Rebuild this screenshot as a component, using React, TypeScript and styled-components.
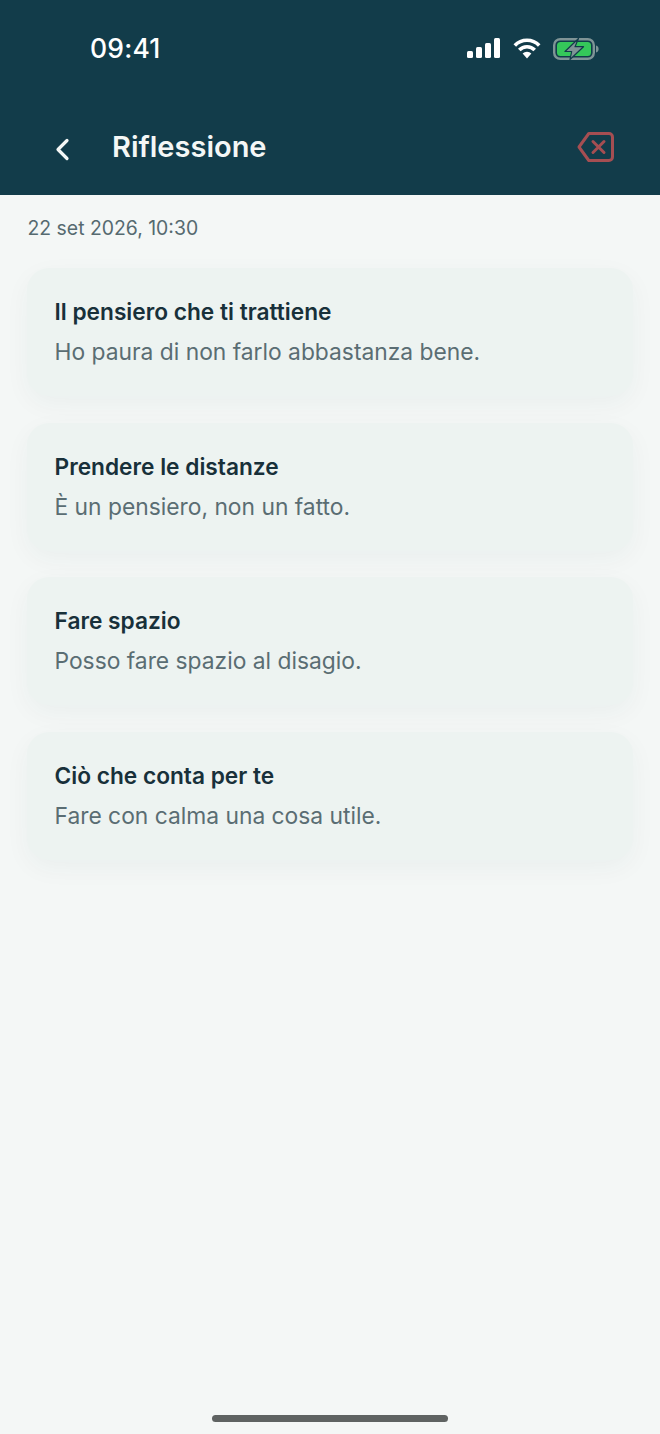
import React from "react";
import styled, { createGlobalStyle } from "styled-components";

const Global = createGlobalStyle`
  html, body { margin: 0; padding: 0; background: #f4f7f6; }
  body { font-family: Inter, "Liberation Sans", sans-serif; }
`;

const Screen = styled.div`
  width: 660px;
  height: 1434px;
  display: flex;
  flex-direction: column;
  background: #f4f7f6;
  overflow: hidden;
`;

const Header = styled.header`
  height: 195px;
  flex: none;
  background: #123c4a;
  display: flex;
  flex-direction: column;
`;

const StatusBar = styled.div`
  height: 97px;
  display: flex;
  align-items: flex-start;
  justify-content: space-between;
  padding: 32px 61px 0 90px;
  box-sizing: border-box;
`;

const Clock = styled.span`
  font-size: 26.5px;
  line-height: 33px;
  font-weight: 500;
  color: #fff;
  letter-spacing: 0.2px;
`;

const StatusIcons = styled.div`
  display: flex;
  align-items: center;
  gap: 12px;
  height: 33px;
`;

const NavBar = styled.div`
  display: flex;
  align-items: center;
  height: 100px;
  padding: 2px 45px 0 55px;
  box-sizing: border-box;
`;

const BackIcon = styled.svg`
  width: 15px;
  height: 24px;
  margin-top: 4px;
  flex: none;
`;

const Title = styled.h1`
  margin: 0 0 0 42px;
  flex: 1;
  font-size: 29px;
  line-height: 36px;
  font-weight: 600;
  color: #f4f7f6;
`;

const Content = styled.main`
  display: flex;
  flex-direction: column;
  padding: 21px 27px 0;
`;

const DateLine = styled.div`
  font-size: 19.4px;
  line-height: 24px;
  color: #566a70;
  margin-left: 0.5px;
  margin-bottom: 28px;
`;

const Cards = styled.div`
  display: flex;
  flex-direction: column;
  gap: 26.6px;
`;

const Card = styled.section`
  height: 128px;
  box-sizing: border-box;
  padding: 29px 27px 0 27.5px;
  border-radius: 22px;
  background: #edf3f1;
  box-shadow: 0 8px 26px rgba(18, 60, 74, 0.045);
`;

const CardTitle = styled.h2`
  margin: 0;
  font-size: 22.7px;
  line-height: 30px;
  font-weight: 600;
  color: #18303a;
`;

const CardText = styled.p`
  margin: 10px 0 0;
  font-size: 22.8px;
  line-height: 30px;
  font-weight: 400;
  color: #5a6d73;
`;

const Footer = styled.div`
  margin-top: auto;
  display: flex;
  justify-content: center;
  padding-bottom: 12px;
`;

const HomeBar = styled.div`
  width: 236px;
  height: 7px;
  border-radius: 4px;
  background: #5f6362;
`;

const items = [
  ["Il pensiero che ti trattiene", "Ho paura di non farlo abbastanza bene."],
  ["Prendere le distanze", "È un pensiero, non un fatto."],
  ["Fare spazio", "Posso fare spazio al disagio."],
  ["Ciò che conta per te", "Fare con calma una cosa utile."],
];

export default function App() {
  return (
    <Screen>
      <Global />
      <Header>
        <StatusBar>
          <Clock>09:41</Clock>
          <StatusIcons>
            <svg width="34" height="22" viewBox="0 0 34 22">
              <g fill="#fff">
                <rect x="0" y="13" width="6" height="7" rx="1.5" />
                <rect x="9" y="9" width="6" height="11" rx="1.5" />
                <rect x="18" y="5" width="6" height="15" rx="1.5" />
                <rect x="27" y="0" width="6" height="20" rx="1.5" />
              </g>
            </svg>
            <svg width="28" height="22" viewBox="0 0 28 22">
              <g fill="none" stroke="#fff" strokeWidth="3.6">
                <path d="M1.8 7.4a17 17 0 0 1 24.4 0" />
                <path d="M6.3 12a10.6 10.6 0 0 1 15.4 0" />
              </g>
              <path d="M9.6 15.4a6.4 6.4 0 0 1 8.8 0L14 20.4z" fill="#fff" />
            </svg>
            <svg width="46" height="22" viewBox="0 0 46 22">
              <rect x="1.2" y="1.2" width="39.6" height="19.6" rx="6" fill="none" stroke="#7f9496" strokeWidth="2.4" />
              <rect x="4" y="4" width="34" height="14" rx="3.5" fill="#35c75a" />
              <path d="M43 7.5c1.8.5 2.6 1.800 2.600 3.500s-.8 3-2.600 3.500z" fill="#7f9496" />
              <path d="M25.500 0.500 12 13.500h6.700L17 21.500 30.500 8.700H22z" fill="#7f9496" stroke="#123c4a" strokeWidth="1.200" strokeLinejoin="round" />
            </svg>
          </StatusIcons>
        </StatusBar>
        <NavBar>
          <BackIcon viewBox="0 0 15 24">
            <path d="M12 3.500 3 12.500l9 9" fill="none" stroke="#f4f7f6" strokeWidth="3.200" strokeLinecap="round" strokeLinejoin="round" />
          </BackIcon>
          <Title>Riflessione</Title>
          <svg width="38" height="32" viewBox="0 0 38 32">
            <path d="M11.800 2.500H32a3.500 3.500 0 0 1 3.500 3.500v20a3.500 3.500 0 0 1-3.500 3.500H11.800L2 16z" fill="none" stroke="#a54e52" strokeWidth="3" strokeLinejoin="round" />
            <path d="M16 10.500l11 11M27 10.500l-11 11" stroke="#a54e52" strokeWidth="3" strokeLinecap="round" />
          </svg>
        </NavBar>
      </Header>
      <Content>
        <DateLine>22 set 2026, 10:30</DateLine>
        <Cards>
          {items.map(([title, text]) => (
            <Card key={title}>
              <CardTitle>{title}</CardTitle>
              <CardText>{text}</CardText>
            </Card>
          ))}
        </Cards>
      </Content>
      <Footer>
        <HomeBar />
      </Footer>
    </Screen>
  );
}
